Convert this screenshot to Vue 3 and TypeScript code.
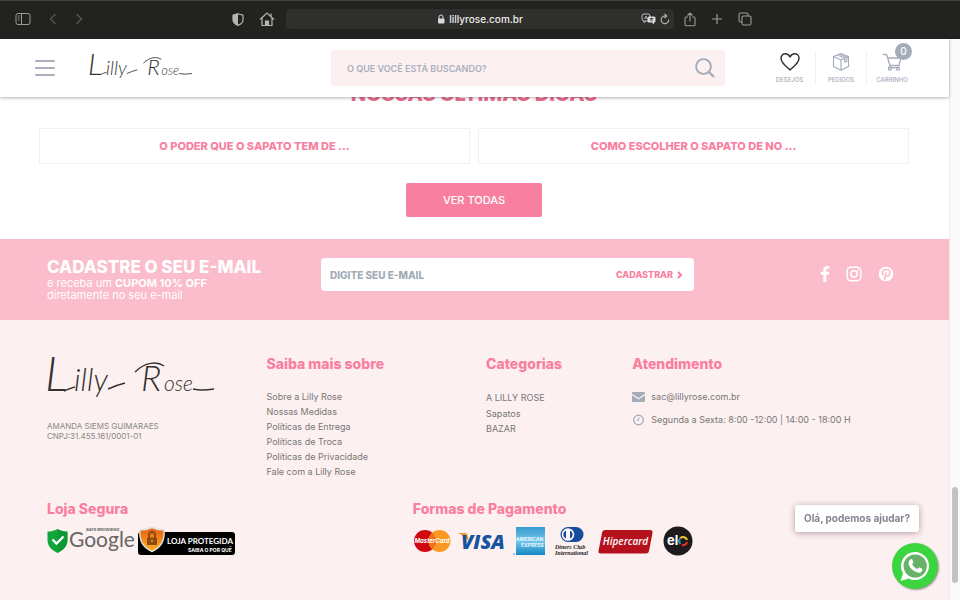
<script setup lang="ts">
import { ref } from 'vue'

interface LinkItem {
  label: string
  href: string
}

const articles: LinkItem[] = [
  { label: 'O PODER QUE O SAPATO TEM DE ...', href: '#sapato' },
  { label: 'COMO ESCOLHER O SAPATO DE NO ...', href: '#escolher' },
]

const aboutLinks: LinkItem[] = [
  { label: 'Sobre a Lilly Rose', href: '#sobre' },
  { label: 'Nossas Medidas', href: '#medidas' },
  { label: 'Políticas de Entrega', href: '#entrega' },
  { label: 'Políticas de Troca', href: '#troca' },
  { label: 'Políticas de Privacidade', href: '#privacidade' },
  { label: 'Fale com a Lilly Rose', href: '#contato' },
]

const categories: LinkItem[] = [
  { label: 'A LILLY ROSE', href: '#lilly' },
  { label: 'Sapatos', href: '#sapatos' },
  { label: 'BAZAR', href: '#bazar' },
]

const search = ref<string>('')
const email = ref<string>('')
const cartCount = ref<number>(0)
</script>

<template>
  <div class="browser">
    <div class="toolbar">
      <div class="tools tools-left">
        <button class="tool" type="button" aria-label="Barra lateral">
          <svg width="16" height="12" viewBox="0 0 16 12" fill="none" stroke="#9b9b99"><rect x="1" y="0.5" width="14" height="11" rx="2" /><path d="M6.5 .5v11M3 3h1.5M3 5h1.5M3 7h1.5" /></svg>
        </button>
        <button class="tool back" type="button" aria-label="Voltar">
          <svg width="8" height="12" viewBox="0 0 8 12" fill="none" stroke="#555553" stroke-width="1.4"><path d="M6.5 1 1.5 6l5 5" /></svg>
        </button>
        <button class="tool forward" type="button" aria-label="Avançar">
          <svg width="8" height="12" viewBox="0 0 8 12" fill="none" stroke="#555553" stroke-width="1.4"><path d="m1.5 1 5 5-5 5" /></svg>
        </button>
        <button class="tool privacy" type="button" aria-label="Privacidade">
          <svg width="12" height="13" viewBox="0 0 12 13"><path d="M6 .7 11 2.3V7c0 2.500-2.400 4.300-5 5.400C3.400 11.300 1 9.500 1 7V2.300z" fill="none" stroke="#b5b5b3" stroke-width="1.200" /><path d="M6 .7v11.700C3.400 11.300 1 9.500 1 7V2.300z" fill="#b5b5b3" /></svg>
        </button>
        <button class="tool" type="button" aria-label="Página inicial">
          <svg width="16" height="15" viewBox="0 0 16 15" fill="none" stroke="#b5b5b3" stroke-width="1.200"><path d="M1 7.500 8 1l7 6.500M3 6v7.500h10V6M12 4.500v-3" /><path d="M6.500 13.500V9h3v4.500" fill="#b5b5b3" /></svg>
        </button>
      </div>
      <div class="address">
        <span class="url">
          <svg width="8" height="10" viewBox="0 0 8 10"><path d="M2 5V3a2 2 0 0 1 4 0v2" fill="none" stroke="#d9d9d9" /><rect x="1" y="4.500" width="6.500" height="5" rx="1" fill="#d9d9d9" /></svg>
          lillyrose.com.br
        </span>
        <span class="address-end">
          <svg width="15" height="12" viewBox="0 0 15 12"><rect x="1" y="1" width="8" height="7" rx="2" fill="none" stroke="#bdbdbd" /><path d="m3 8v2l2-2M3.500 6 5 3l1.500 3M4 5h2" fill="none" stroke="#bdbdbd" stroke-width=".8" /><path d="M8 3.500h5a1.500 1.500 0 0 1 1.500 1.500v3A1.500 1.500 0 0 1 13 9.500V11.500L11 9.500H8A1.500 1.500 0 0 1 6.500 8V5A1.500 1.500 0 0 1 8 3.500z" fill="#dedede" /><path d="M8.500 5.500h4M10.500 4.700v.8M12 5.500 9 8.300M9.300 6l2.700 2.300" fill="none" stroke="#333" stroke-width=".7" /></svg>
          <svg width="10" height="12" viewBox="0 0 10 12" fill="none" stroke="#b5b5b3" stroke-width="1.100"><path d="M8.700 6.500A3.800 3.800 0 1 1 5 3h1M4.500 .8 6.700 3 4.500 5" /></svg>
        </span>
      </div>
      <div class="tools tools-right">
        <button class="tool" type="button" aria-label="Compartilhar">
          <svg width="12" height="15" viewBox="0 0 12 15" fill="none" stroke="#9b9b99" stroke-width="1.100"><path d="M4 5H2.200A1.200 1.200 0 0 0 1 6.200v6.300c0 .8.500 1.300 1.200 1.300h7.600c.7 0 1.200-.5 1.200-1.300V6.200C11 5.500 10.500 5 9.800 5H8M6 9.500V1M3.500 3.500 6 1l2.500 2.500" /></svg>
        </button>
        <button class="tool" type="button" aria-label="Nova aba">
          <svg width="12" height="12" viewBox="0 0 12 12" stroke="#9b9b99" stroke-width="1.200"><path d="M6 1v10M1 6h10" /></svg>
        </button>
        <button class="tool" type="button" aria-label="Abas">
          <svg width="14" height="14" viewBox="0 0 14 14" fill="none" stroke="#9b9b99" stroke-width="1.100"><rect x="4" y="4" width="9" height="9" rx="1.500" /><path d="M4 10H2.500A1.500 1.500 0 0 1 1 8.500v-6A1.500 1.500 0 0 1 2.500 1h6A1.500 1.500 0 0 1 10 2.500V4" /></svg>
        </button>
      </div>
    </div>

    <div class="viewport">
      <div class="page">
        <header class="header">
          <div class="brand">
            <button class="menu" type="button" aria-label="Menu"><i></i><i></i><i></i></button>
            <a class="brand-link" href="#inicio">
              <svg class="wordmark" viewBox="0 0 168 52">
                <text y="37"><tspan x="-2" font-size="48">L</tspan><tspan x="27" font-size="31">illy</tspan></text>
                <text y="37"><tspan x="94" font-size="36">R</tspan><tspan x="117" font-size="21">ose</tspan></text>
                <path d="M17 37q7-3 11-4M61 35q9-4 17-6M88 18c10-10 22-11 29-6M146 35q8 2 21 0" />
              </svg>
            </a>
          </div>
          <form class="search" @submit.prevent>
            <input v-model="search" type="text" aria-label="Buscar" placeholder="O QUE VOCÊ ESTÁ BUSCANDO?" />
            <button type="submit" aria-label="Pesquisar">
              <svg width="20" height="20" viewBox="0 0 20 20" fill="none" stroke="#a4abb9" stroke-width="1.900"><circle cx="8.500" cy="8.500" r="7.400" /><path d="m14 14 5 5" stroke-width="2.300" /></svg>
            </button>
          </form>
          <nav class="actions">
            <a href="#desejos">
              <svg width="20" height="20" viewBox="0 0 20 20" fill="none" stroke="#333" stroke-width="1.500" stroke-linejoin="round"><path d="M10 18C7.500 15.300 1 11.500 1 6.300 1 3.500 3 1.800 5.300 1.800c2 0 3.700 1.200 4.700 3.200 1-2 2.700-3.200 4.700-3.200C17 1.800 19 3.500 19 6.300 19 11.500 12.500 15.300 10 18z" /></svg>
              <span>DESEJOS</span>
            </a>
            <a href="#pedidos">
              <svg width="20" height="20" viewBox="0 0 20 20" fill="none" stroke="#a4abb9" stroke-width="1.100" stroke-linejoin="round"><path d="m10 1.500 7.500 3v10L10 18.300 2.500 14.500v-10zM2.500 4.500 10 8l7.500-3.500M10 8v10.300M6.300 3l7.500 3.300v4l2-1V5.300L8 2.300" /></svg>
              <span>PEDIDOS</span>
            </a>
            <a href="#carrinho">
              <svg width="20" height="20" viewBox="0 0 20 20" fill="none" stroke="#a4abb9" stroke-width="1.300" stroke-linejoin="round"><path d="M1 2.500h3.500L8 13.500h9L19 6H5.700M8 13.500l-1 2.200h10" /><circle cx="8" cy="16.700" r="1.500" /><circle cx="16" cy="16.700" r="1.500" /></svg>
              <span>CARRINHO</span>
              <b class="count">{{ cartCount }}</b>
            </a>
          </nav>
        </header>

        <section class="tips">
          <h2>NOSSAS ÚLTIMAS DICAS</h2>
          <div class="articles">
            <a v-for="item in articles" :key="item.href" :href="item.href">{{ item.label }}</a>
          </div>
          <button class="see-all" type="button">VER TODAS</button>
        </section>

        <section class="newsletter">
          <div class="pitch">
            <h2>CADASTRE O SEU E-MAIL</h2>
            <p>e receba um <b>CUPOM 10% OFF</b><br />diretamente no seu e-mail</p>
          </div>
          <form class="signup" @submit.prevent>
            <input v-model="email" type="email" aria-label="E-mail" placeholder="DIGITE SEU E-MAIL" />
            <button type="submit">
              CADASTRAR
              <svg width="6" height="8" viewBox="0 0 6 8" fill="none" stroke="#f97fa0" stroke-width="2"><path d="m1 1 3 3-3 3" /></svg>
            </button>
          </form>
          <nav class="social">
            <a href="#facebook" aria-label="Facebook">
              <svg width="10" height="16" viewBox="0 0 10 16" fill="#fff"><path d="M9.300.2v2.600H7.700c-1.200 0-1.400.6-1.400 1.400v1.600h2.900l-.4 2.900H6.300V16h-3V8.700H.7V5.800h2.600V3.600C3.300 1.200 4.800 0 7 0c1 0 2 .1 2.300.2z" /></svg>
            </a>
            <a href="#instagram" aria-label="Instagram">
              <svg width="16" height="16" viewBox="0 0 16 16" fill="none" stroke="#fff" stroke-width="1.500"><rect x="1.200" y="1.200" width="13.600" height="13.600" rx="3.800" /><circle cx="8" cy="8" r="3.200" /><circle cx="12" cy="4" r=".5" fill="#fff" stroke-width=".8" /></svg>
            </a>
            <a href="#pinterest" aria-label="Pinterest">
              <svg width="16" height="16" viewBox="0 0 16 16"><circle cx="8" cy="8" r="7.300" fill="#fff" /><path d="M5.700 9.300C4.800 8.800 4.400 8 4.400 7c0-1.900 1.600-3.500 3.900-3.500 2.100 0 3.500 1.300 3.500 3.100 0 2.100-1.100 3.600-2.600 3.600-.8 0-1.500-.5-1.700-1.100M8.100 6.500 6.300 13.800" fill="none" stroke="#fbbccb" stroke-width="1.600" /></svg>
            </a>
          </nav>
        </section>

        <footer class="footer">
          <div class="columns">
            <div>
              <svg class="wordmark wordmark-large" viewBox="0 0 168 52">
                <text y="37"><tspan x="-2" font-size="48">L</tspan><tspan x="27" font-size="31">illy</tspan></text>
                <text y="37"><tspan x="94" font-size="36">R</tspan><tspan x="117" font-size="21">ose</tspan></text>
                <path d="M17 37q7-3 11-4M61 35q9-4 17-6M88 18c10-10 22-11 29-6M146 35q8 2 21 0" />
              </svg>
              <p class="company">AMANDA SIEMS GUIMARAES<br />CNPJ:31.455.161/0001-01</p>
            </div>
            <nav>
              <h3>Saiba mais sobre</h3>
              <ul>
                <li v-for="item in aboutLinks" :key="item.href"><a :href="item.href">{{ item.label }}</a></li>
              </ul>
            </nav>
            <nav>
              <h3>Categorias</h3>
              <ul class="categories">
                <li v-for="item in categories" :key="item.href"><a :href="item.href">{{ item.label }}</a></li>
              </ul>
            </nav>
            <div>
              <h3>Atendimento</h3>
              <ul class="contact">
                <li>
                  <svg width="13" height="10" viewBox="0 0 13 10" fill="#a4abb9"><path d="M1 0h11a1 1 0 0 1 1 1v.7L6.500 6 0 1.700V1a1 1 0 0 1 1-1zM0 3.200l6.500 4.200L13 3.200V9a1 1 0 0 1-1 1H1a1 1 0 0 1-1-1z" /></svg>
                  <a href="#email">sac@lillyrose.com.br</a>
                </li>
                <li>
                  <svg width="13" height="12" viewBox="0 0 13 12" fill="none" stroke="#a4abb9" stroke-width="1.300"><circle cx="6.500" cy="6" r="4.800" /><path d="M6.700 3v3.300H4.500" stroke-width="1" /></svg>
                  <span>Segunda a Sexta: 8:00 -12:00 | 14:00 - 18:00 H</span>
                </li>
              </ul>
            </div>
          </div>

          <div class="trust">
            <div>
              <h3>Loja Segura</h3>
              <div class="seals">
                <svg width="90" height="30" viewBox="0 0 90 30">
                  <path d="M10.500 3C14 5 17.500 5.500 20.500 5.500V14c0 6-4 10-10 13-6-3-10-7-10-13V5.500c3 0 6.500-.5 10-2.500z" fill="#11a63b" /><path d="M10.500 3C14 5 17.500 5.500 20.500 5.500V14c0 6-4 10-10 13z" fill="#078b2c" opacity=".5" />
                  <path d="m5.500 13.500 4 4 7-7" fill="none" stroke="#fff" stroke-width="2.400" />
                  <text x="22" y="21" class="google">Google</text>
                  <text x="39" y="5" class="safe">SAFE BROWSING</text>
                </svg>
                <svg width="99" height="30" viewBox="0 0 99 30">
                  <defs><linearGradient id="amber" x2="0" y2="1"><stop stop-color="#e85b13" /><stop offset="1" stop-color="#ffb420" /></linearGradient></defs>
                  <rect x="1" y="6" width="97" height="23" rx="3" />
                  <path d="M15 1.500c4 2 8 2.500 12 2.500 1 10-2 17-12 21.500C5 21 2 14 3 4c4 0 8-.5 12-2.500z" fill="url(#amber)" stroke="#ddd" stroke-width="1.400" />
                  <path d="M12 12V9a3 3 0 0 1 6 0v3" fill="none" stroke="#8b4a10" stroke-width="2" /><rect x="10" y="11.500" width="10" height="7.500" rx="1" fill="#8b4a10" /><circle cx="15" cy="15" r="1.200" fill="#e78b22" />
                  <text x="30" y="18" class="protected">LOJA PROTEGIDA</text>
                  <text x="51" y="26" class="why">SAIBA O POR QUÊ</text>
                </svg>
              </div>
            </div>
            <div>
              <h3>Formas de Pagamento</h3>
              <div class="payments">
                <svg width="38" height="30" viewBox="0 0 38 30"><circle cx="12" cy="15" r="11" fill="#d00812" /><circle cx="26.500" cy="15" r="11" fill="#fc9922" /><path d="M19.250 6.700a11 11 0 0 1 0 16.600 11 11 0 0 1 0-16.600z" fill="#ee711c" /><text x="19" y="17" class="mastercard">MasterCard</text></svg>
                <svg width="48" height="30" viewBox="0 0 48 30"><path d="M0 7h7q2 0 2.500 2L11 16Q7 10 0 7z" fill="#f29a26" /><text x="3" y="23" class="visa">VISA</text></svg>
                <svg width="33" height="30" viewBox="0 0 33 30"><defs><linearGradient id="amex" x2="0" y2="1"><stop stop-color="#379ad0" /><stop offset=".5" stop-color="#72c7e8" /><stop offset="1" stop-color="#1587c4" /></linearGradient></defs><rect x="3" y="1" width="29" height="28" fill="url(#amex)" /><circle cx="1" cy="28" r="1" fill="#6eb5da" /><text x="3" y="15" class="amex">AMERICAN</text><text x="8" y="21" class="amex">EXPRESS</text></svg>
                <svg width="38" height="30" viewBox="0 0 38 30"><path d="M15 1h8a7.500 7.500 0 0 1 0 15h-8a7.500 7.500 0 0 1 0-15z" fill="#174b9b" /><circle cx="15" cy="8.500" r="6.300" fill="#fdf8f8" /><path d="M13 4.500a4.300 4.300 0 0 0 0 8zM17 4.500a4.300 4.300 0 0 1 0 8z" fill="#174b9b" /><text x="2" y="23" class="diners">Diners Club</text><text x="2" y="29" class="diners">International</text></svg>
                <svg width="58" height="30" viewBox="0 0 58 30"><path d="M7 4h45q3 0 2.500 3L51 25q-.5 2.500-3 2.500H3Q0 27.500.500 25L4 7q.5-3 3-3z" fill="#b5121d" /><text x="27.500" y="19" class="hipercard">Hipercard</text></svg>
                <svg width="30" height="30" viewBox="0 0 30 30"><circle cx="15" cy="15" r="14.500" fill="#1d1b1b" /><text x="4" y="19" class="elo">el</text><g fill="none" stroke-width="2.200"><path d="M17.500 18a4 4 0 0 1 0-6" stroke="#278fc7" /><path d="M17.500 12a4 4 0 0 1 6.500 2" stroke="#f5c529" /><path d="M24 16a4 4 0 0 1-5 3" stroke="#df3326" /></g></svg>
              </div>
            </div>
          </div>
        </footer>
      </div>
      <div class="scrollbar"><div class="thumb"></div></div>
    </div>

    <aside class="chat">
      <span class="bubble">Olá, podemos ajudar?</span>
      <button type="button" aria-label="WhatsApp">
        <svg width="32" height="32" viewBox="0 0 32 32"><path d="M16 2a14 14 0 1 1-6.500 26.400L1.500 31 4 23.200A14 14 0 0 1 16 2z" fill="#fff" /><circle cx="16.200" cy="16" r="11.600" fill="#65b268" /><path d="M11.400 9.400c.6-.6 1.500-.6 1.900.2l1 2.400c.3.900-.6 1.500-1.200 2.200 1.100 2.200 2.900 3.800 5.300 4.800.8-.8 1.300-1.900 2.200-1.500l2.500 1.300c.7.500.3 1.900-.4 2.700-1.400 1.500-3.300 1.400-5.500.6-3.600-1.400-6.200-4.300-7.500-7.600-.6-1.900.3-4 1.700-5.100z" fill="#fff" /></svg>
      </button>
    </aside>
  </div>
</template>

<style>
body {
  margin: 0;
}
</style>

<style scoped>
* {
  box-sizing: border-box;
}
.browser {
  display: flex;
  flex-direction: column;
  min-height: 100vh;
  font-family: Inter, "Open Sans", sans-serif;
  font-size: 10px;
  color: #777;
}
h2, h3, p, ul {
  margin: 0;
  padding: 0;
}
h2, h3 {
  font-weight: 800;
}
ul {
  list-style: none;
}
a {
  color: inherit;
  text-decoration: none;
}
button, input {
  margin: 0;
  padding: 0;
  border: 0;
  background: none;
  font: inherit;
  color: inherit;
}
button {
  cursor: pointer;
}
svg {
  display: block;
  flex: none;
}
.toolbar {
  display: grid;
  grid-template-columns: 286fr 388fr 286fr;
  align-items: center;
  padding: 8px 0 10px;
  background: #222220;
  border-top: 1px solid #40403f;
}
.tools {
  display: flex;
  align-items: center;
}
.tools-left {
  padding: 0 11px 0 15px;
}
.back {
  margin-left: 18px;
}
.forward {
  margin-left: 18px;
}
.privacy {
  margin: 0 15px 0 auto;
}
.tools-right {
  padding-left: 10px;
  gap: 15px;
}
.address {
  display: grid;
  grid-template-columns: 1fr auto 1fr;
  align-items: center;
  min-height: 20px;
  border-radius: 4px;
  background: #2f2f2d;
}
.url {
  grid-column: 2;
  display: flex;
  gap: 4px;
  align-items: center;
  font-weight: 500;
  color: #ececec;
}
.address-end {
  display: flex;
  justify-content: flex-end;
  align-items: center;
  gap: 4px;
  padding-right: 4px;
}
.viewport {
  display: grid;
  grid-template-columns: 1fr 11px;
  flex: 1;
}
.page {
  display: flex;
  flex-direction: column;
  min-width: 0;
  background: #fff;
}
.header {
  position: relative;
  z-index: 1;
  display: grid;
  grid-template-columns: 331fr 394fr 224fr;
  align-items: center;
  padding: 11px 0;
  background: #fff;
  box-shadow: 0 1px 3px rgba(0, 0, 0, 0.3);
}
.brand {
  display: flex;
  align-items: center;
  gap: 34px;
  padding-left: 35px;
}
.menu {
  display: grid;
  gap: 5px;
  width: 20px;
}
.menu i {
  height: 2px;
  border-radius: 1px;
  background: #a9afbd;
}
.wordmark {
  width: 104px;
  height: 32px;
  overflow: visible;
}
.wordmark text {
  font-family: Lato, sans-serif;
  font-style: italic;
  font-weight: 300;
  fill: #333;
}
.wordmark path {
  fill: none;
  stroke: #333;
  stroke-width: 1.4;
}
.wordmark-large {
  width: 168px;
  height: 52px;
}
.search {
  display: flex;
  align-items: center;
  height: 36px;
  padding: 0 10px 0 16px;
  border-radius: 4px;
  background: #fdf0f0;
}
.search input {
  flex: 1;
  min-width: 0;
  outline: none;
  font-size: 9px;
  font-weight: 600;
}
.search input::placeholder {
  color: #a9afbd;
  opacity: 1;
}
.actions {
  display: flex;
  justify-content: flex-end;
  padding-right: 32px;
}
.actions a {
  position: relative;
  display: flex;
  flex-direction: column;
  align-items: center;
  gap: 4px;
  width: 51px;
  font-size: 6px;
  line-height: 8px;
  font-weight: 500;
  color: #a4abb9;
}
.actions a + a {
  border-left: 1px solid #f0f0f2;
}
.count {
  position: absolute;
  top: -9px;
  right: 5px;
  width: 17px;
  height: 17px;
  border-radius: 50%;
  background: #a4abb9;
  color: #fff;
  font-size: 10px;
  font-weight: 500;
  line-height: 17px;
  text-align: center;
}
.tips {
  display: flex;
  flex-direction: column;
  align-items: center;
  padding: 0 40px 22px 39px;
}
.tips h2 {
  margin-top: -16px;
  font-size: 20px;
  line-height: 26px;
  color: #ea6d8f;
}
.articles {
  display: grid;
  grid-template-columns: 1fr 1fr;
  gap: 8px;
  width: 100%;
  margin: 21px 0 19px;
}
.articles a {
  padding: 10px;
  border: 1px solid #f1f1f2;
  text-align: center;
  font-size: 11px;
  line-height: 14px;
  font-weight: 800;
  color: #f97fa0;
}
.see-all {
  padding: 10px 37px;
  border-radius: 2px;
  background: #f97fa0;
  color: #fff;
  font-size: 11px;
  line-height: 14px;
  font-weight: 500;
}
.newsletter {
  display: grid;
  grid-template-columns: 274fr 373fr 231fr;
  align-items: start;
  padding: 19px 24px 19px 47px;
  background: #fbbccb;
  color: #fff;
}
.pitch h2 {
  font-size: 17px;
  line-height: 19px;
}
.pitch p {
  font-size: 11px;
  line-height: 12px;
}
.signup {
  display: flex;
  align-items: center;
  height: 33px;
  padding: 0 11px 0 9px;
  border-radius: 4px;
  background: #fff;
}
.signup input {
  flex: 1;
  min-width: 0;
  outline: none;
  font-weight: 800;
}
.signup input::placeholder {
  color: #a4abb9;
  opacity: 1;
}
.signup button {
  display: flex;
  align-items: center;
  gap: 4px;
  font-size: 9px;
  font-weight: 800;
  color: #f97fa0;
}
.social {
  display: flex;
  justify-content: flex-end;
  align-items: center;
  gap: 16px;
  min-height: 32px;
  padding-right: 31px;
}
.footer {
  flex: 1;
  padding: 34px 24px 31px 47px;
  background: #fdf0f0;
}
.footer h3 {
  font-size: 14px;
  line-height: 20px;
  color: #f97fa0;
}
.columns {
  display: grid;
  grid-template-columns: 3fr 3fr 2fr 4fr;
}
.columns ul {
  margin-top: 15px;
  font-size: 9px;
  line-height: 15px;
}
.categories li:first-child {
  padding: 1px 0;
}
.company {
  margin-top: 15px;
  font-size: 8px;
  line-height: 10px;
  color: #888;
}
.contact {
  display: grid;
  gap: 8px;
}
.contact li {
  display: flex;
  align-items: center;
  gap: 6px;
}
.trust {
  display: grid;
  grid-template-columns: 5fr 7fr;
  margin-top: 20px;
}
.seals, .payments {
  display: flex;
  margin-top: 7px;
}
.payments {
  gap: 7px;
}
.google {
  font-family: Lato, sans-serif;
  font-size: 21px;
  fill: #666;
}
.safe {
  font-size: 4px;
  font-weight: 700;
  fill: #666;
}
.protected {
  font-family: Lato, sans-serif;
  font-size: 8px;
  font-weight: 700;
  fill: #fff;
}
.why {
  font-size: 5px;
  font-weight: 700;
  fill: #fff;
}
.mastercard {
  font-size: 6px;
  font-style: italic;
  font-weight: 700;
  text-anchor: middle;
  fill: #fff;
}
.visa {
  font-family: "Open Sans", sans-serif;
  font-size: 20px;
  font-style: italic;
  font-weight: 800;
  fill: #17549f;
}
.amex {
  font-size: 5px;
  font-weight: 700;
  fill: #e9f7ff;
}
.diners {
  font-family: "Liberation Serif", serif;
  font-size: 6px;
  font-style: italic;
  font-weight: 700;
  fill: #222;
}
.hipercard {
  font-family: "Open Sans", sans-serif;
  font-size: 10px;
  font-style: italic;
  font-weight: 600;
  text-anchor: middle;
  fill: #fff;
}
.elo {
  font-size: 13px;
  font-weight: 700;
  fill: #fff;
}
.scrollbar {
  display: flex;
  flex-direction: column;
  justify-content: flex-end;
  padding: 0 2px 17px;
  border-left: 1px solid #ececec;
  background: #fafafa;
}
.thumb {
  height: 96px;
  border-radius: 4px;
  background: #c2c2c2;
}
.chat {
  position: fixed;
  right: 22px;
  bottom: 11px;
  z-index: 2;
  display: flex;
  flex-direction: column;
  align-items: flex-end;
  gap: 11px;
}
.bubble {
  margin-right: 19px;
  padding: 6px 9px 7px;
  border-radius: 3px;
  background: #fff;
  box-shadow: 0 1px 6px rgba(60, 30, 40, 0.4);
  font-size: 10px;
  line-height: 14px;
  font-weight: 700;
  color: #83858f;
}
.chat button {
  display: grid;
  place-items: center;
  width: 46px;
  height: 46px;
  border-radius: 50%;
  background: #3bd53f;
  box-shadow: 1px 1px 2px rgba(0, 0, 0, 0.4);
}
</style>
